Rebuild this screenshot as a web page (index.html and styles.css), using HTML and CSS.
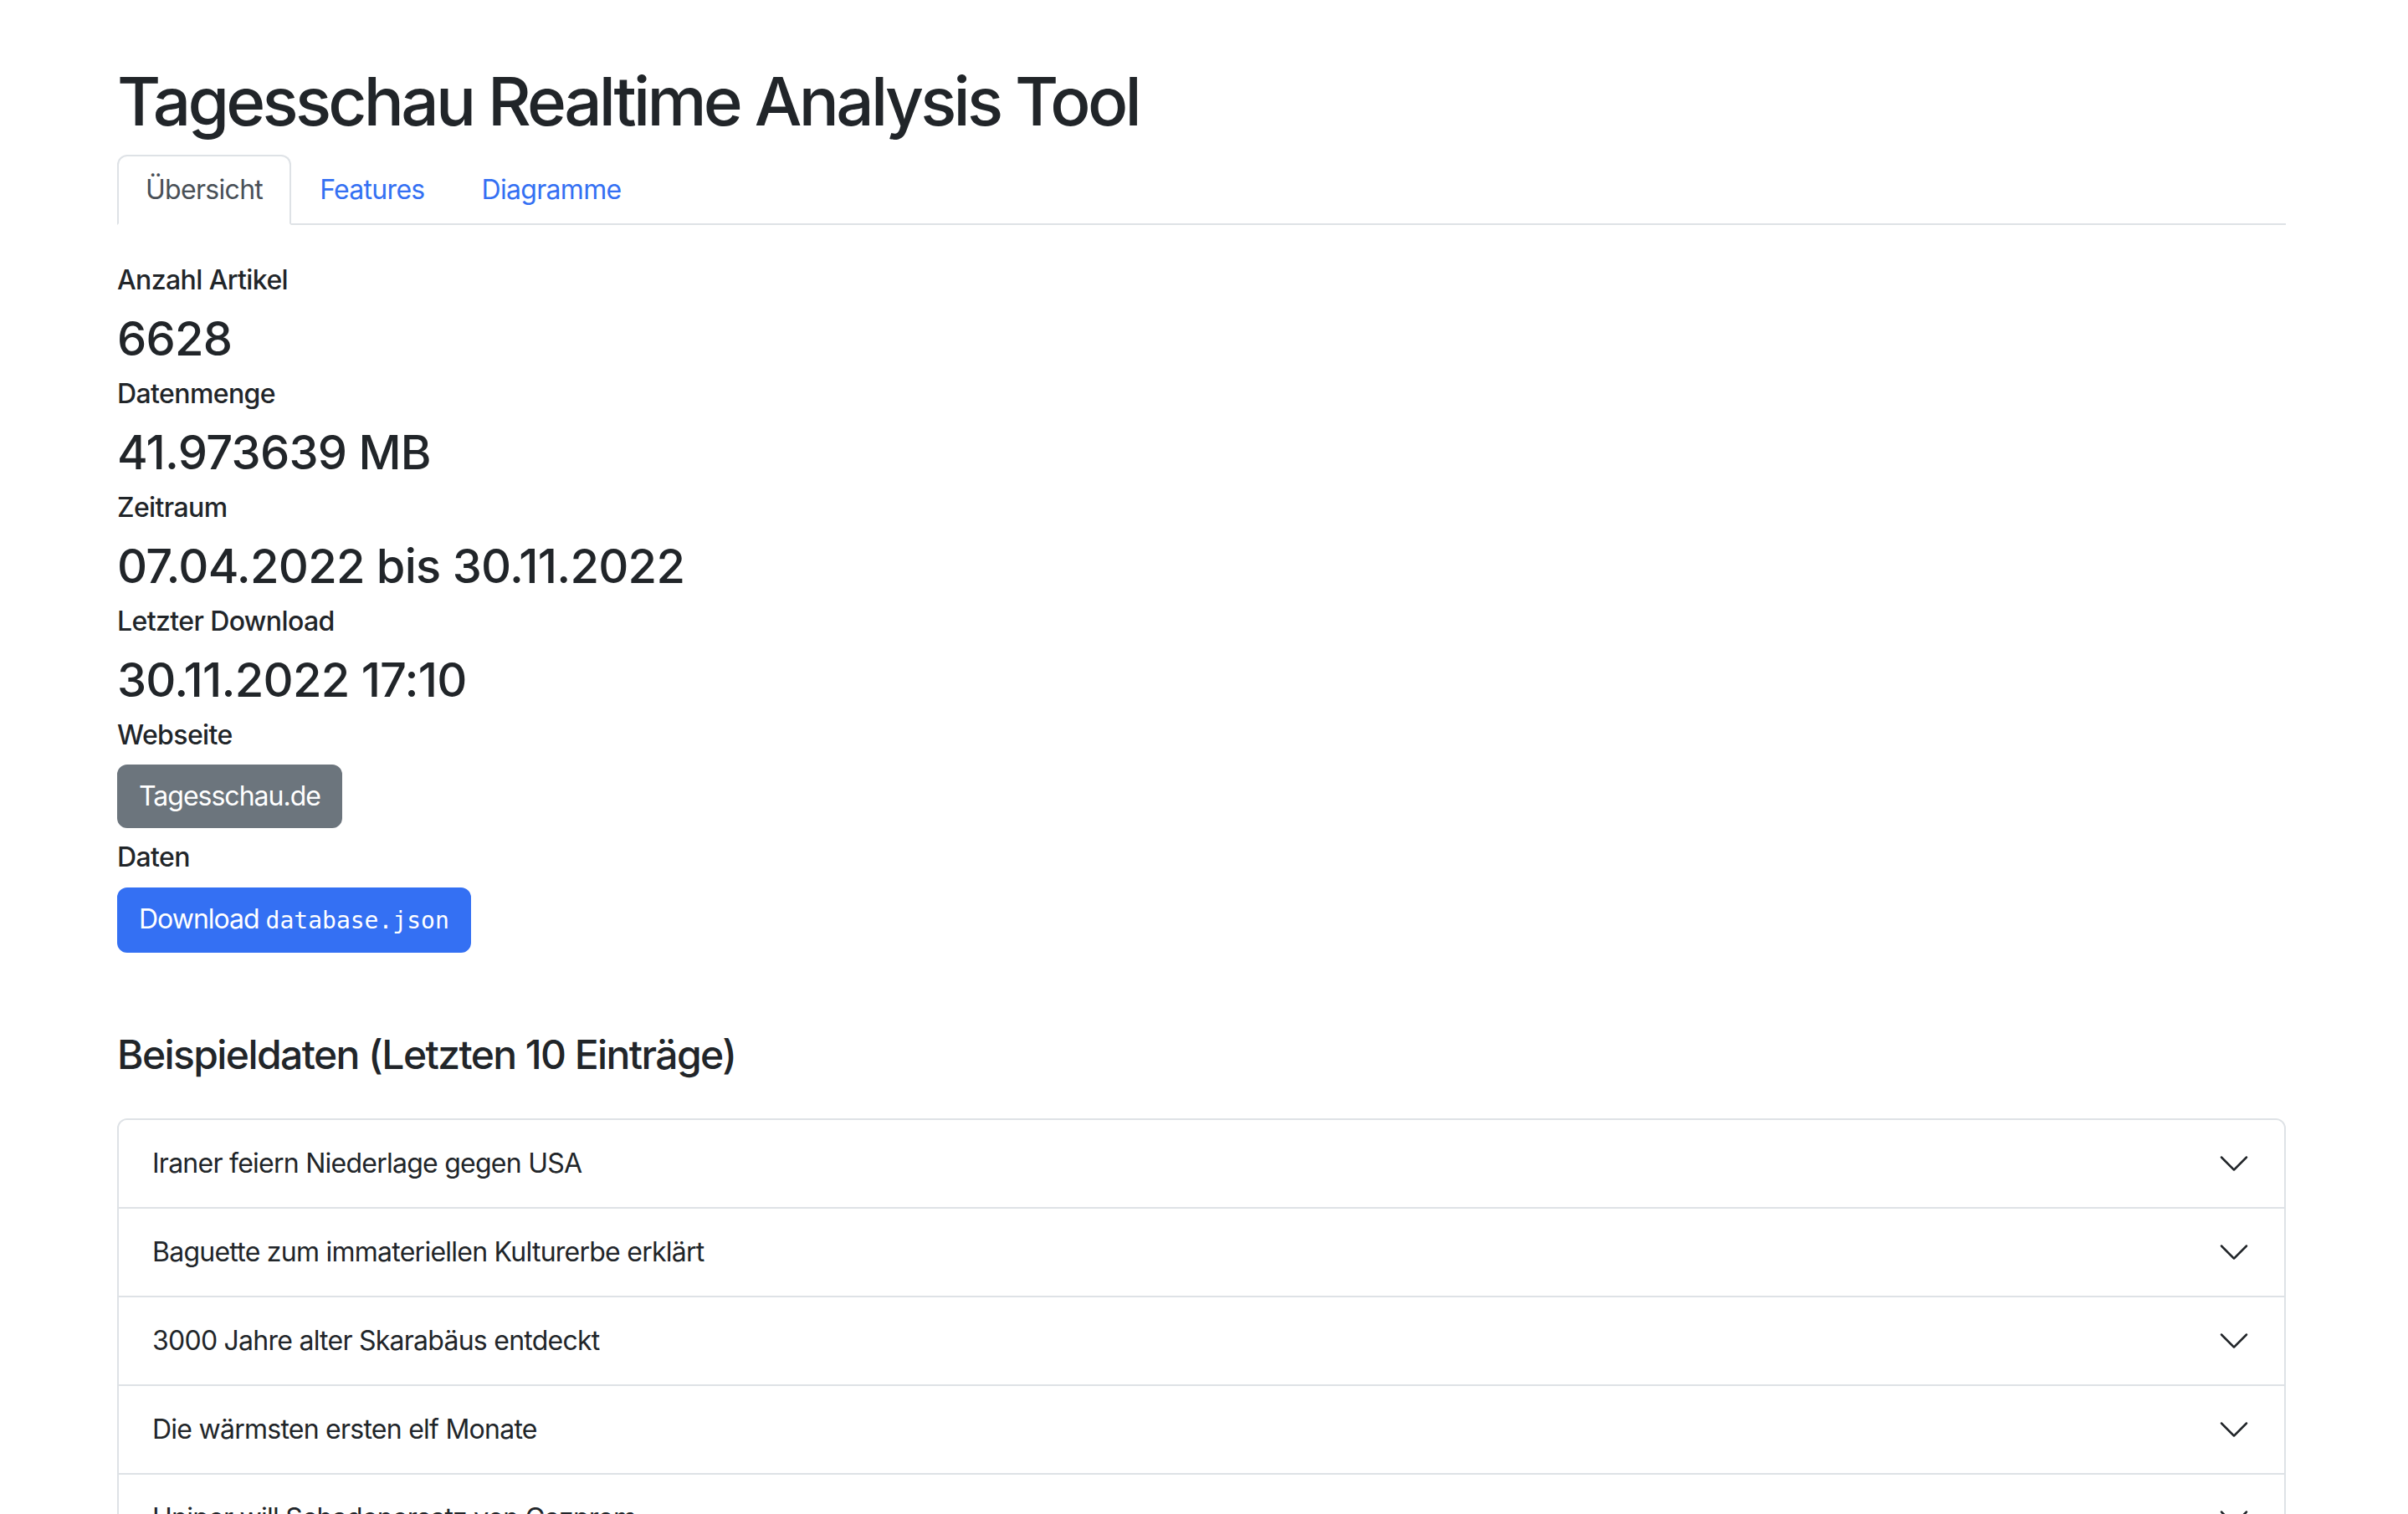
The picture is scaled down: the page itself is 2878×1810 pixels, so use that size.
FILE: index.html
```html
<!DOCTYPE html>
<html lang="de">
<head>
<meta charset="utf-8">
<title>Tagesschau Realtime Analysis Tool</title>
<link rel="stylesheet" href="styles.css">
</head>
<body>
<div class="container">
  <h1 class="title">Tagesschau Realtime Analysis Tool</h1>
  <ul class="nav-tabs">
    <li><a class="nav-link active" href="#">Übersicht</a></li>
    <li><a class="nav-link" href="#">Features</a></li>
    <li><a class="nav-link" href="#">Diagramme</a></li>
  </ul>
  <div class="tab-pane">
    <div class="label">Anzahl Artikel</div>
    <div class="value">6628</div>
    <div class="label">Datenmenge</div>
    <div class="value">41.973639 MB</div>
    <div class="label">Zeitraum</div>
    <div class="value">07.04.2022 bis 30.11.2022</div>
    <div class="label">Letzter Download</div>
    <div class="value">30.11.2022 17:10</div>
    <div class="label">Webseite</div>
    <div class="btn-row"><a class="btn btn-secondary" href="#">Tagesschau.de</a></div>
    <div class="label">Daten</div>
    <div class="btn-row"><a class="btn btn-primary" href="#">Download <code>database.json</code></a></div>

    <h4 class="section-title">Beispieldaten (Letzten 10 Einträge)</h4>
    <div class="accordion">
      <div class="acc-item"><button class="acc-btn"><span>Iraner feiern Niederlage gegen USA</span><svg class="chev" viewBox="0 0 16 16"><path fill="#212529" fill-rule="evenodd" d="M1.646 4.646a.5.5 0 0 1 .708 0L8 10.293l5.646-5.647a.5.5 0 0 1 .708.708l-6 6a.5.5 0 0 1-.708 0l-6-6a.5.5 0 0 1 0-.708z"/></svg></button></div>
      <div class="acc-item"><button class="acc-btn"><span>Baguette zum immateriellen Kulturerbe erklärt</span><svg class="chev" viewBox="0 0 16 16"><path fill="#212529" fill-rule="evenodd" d="M1.646 4.646a.5.5 0 0 1 .708 0L8 10.293l5.646-5.647a.5.5 0 0 1 .708.708l-6 6a.5.5 0 0 1-.708 0l-6-6a.5.5 0 0 1 0-.708z"/></svg></button></div>
      <div class="acc-item"><button class="acc-btn"><span>3000 Jahre alter Skarabäus entdeckt</span><svg class="chev" viewBox="0 0 16 16"><path fill="#212529" fill-rule="evenodd" d="M1.646 4.646a.5.5 0 0 1 .708 0L8 10.293l5.646-5.647a.5.5 0 0 1 .708.708l-6 6a.5.5 0 0 1-.708 0l-6-6a.5.5 0 0 1 0-.708z"/></svg></button></div>
      <div class="acc-item"><button class="acc-btn"><span>Die wärmsten ersten elf Monate</span><svg class="chev" viewBox="0 0 16 16"><path fill="#212529" fill-rule="evenodd" d="M1.646 4.646a.5.5 0 0 1 .708 0L8 10.293l5.646-5.647a.5.5 0 0 1 .708.708l-6 6a.5.5 0 0 1-.708 0l-6-6a.5.5 0 0 1 0-.708z"/></svg></button></div>
      <div class="acc-item"><button class="acc-btn"><span>Uniper will Schadenersatz von Gazprom</span><svg class="chev" viewBox="0 0 16 16"><path fill="#212529" fill-rule="evenodd" d="M1.646 4.646a.5.5 0 0 1 .708 0L8 10.293l5.646-5.647a.5.5 0 0 1 .708.708l-6 6a.5.5 0 0 1-.708 0l-6-6a.5.5 0 0 1 0-.708z"/></svg></button></div>
    </div>
  </div>
</div>
</body>
</html>
```

FILE: styles.css
```css
* { box-sizing: border-box; }
html, body {
  margin: 0;
  padding: 0;
  background: #fff;
}
body {
  font-family: Inter, "Noto Sans", "Liberation Sans", sans-serif;
  font-size: 32px;
  line-height: 1.5;
  color: #212529;
  letter-spacing: -0.7px;
}
.container {
  width: 2592px;
  margin-left: 140px;
  padding-top: 73px;
  padding-bottom: 80px;
}
.title {
  margin: 0 0 16px;
  font-size: 80px;
  font-weight: 500;
  line-height: 96px;
  letter-spacing: -3.7px;
}
.nav-tabs {
  display: flex;
  list-style: none;
  margin: 0;
  padding: 0;
  border-bottom: 2px solid #dee2e6;
}
.nav-tabs li { margin-bottom: -2px; }
.nav-link {
  display: block;
  padding: 16px 32px;
  line-height: 48px;
  color: #3470f3;
  text-decoration: none;
  border: 2px solid transparent;
  border-radius: 12px 12px 0 0;
}
.nav-link.active {
  color: #495057;
  background: #fff;
  border-color: #dee2e6 #dee2e6 #fff;
}
.tab-pane { padding-top: 47px; }
.label {
  font-size: 32px;
  font-weight: 500;
  line-height: 38.4px;
  margin-bottom: 16px;
  letter-spacing: -0.6px;
}
.value {
  font-size: 56px;
  font-weight: 500;
  line-height: 65.6px;
  padding-top: 3px;
  margin-bottom: 13px;
  letter-spacing: -0.75px;
}
.btn-row {
  display: flex;
  margin-bottom: 16px;
}
.btn {
  display: inline-block;
  padding: 12px 24px;
  font-size: 32px;
  line-height: 48px;
  border: 2px solid transparent;
  border-radius: 12px;
  color: #fff;
  text-decoration: none;
  letter-spacing: -1px;
}
.btn-secondary { background: #6c757d; border-color: #6c757d; }
.btn-primary { background: #3470f3; border-color: #3470f3; }
.btn code {
  font-family: "DejaVu Sans Mono", "Liberation Mono", monospace;
  font-size: 28px;
  color: #fff;
  letter-spacing: 0;
}
.section-title {
  margin: 93px 0 48px;
  font-size: 48px;
  font-weight: 500;
  line-height: 57.6px;
  letter-spacing: -1.6px;
}
.accordion {
  border: 2px solid #dee2e6;
  border-radius: 12px;
  overflow: hidden;
}
.acc-item + .acc-item { border-top: 2px solid #dee2e6; }
.acc-btn {
  display: flex;
  align-items: center;
  width: 100%;
  padding: 28px 40px;
  font: inherit;
  font-size: 32px;
  line-height: 48px;
  color: #212529;
  background: #fff;
  border: 0;
  text-align: left;
  letter-spacing: -0.75px;
}
.acc-btn span { flex: 1; }
.chev {
  width: 40px;
  height: 40px;
  flex-shrink: 0;
}
```
